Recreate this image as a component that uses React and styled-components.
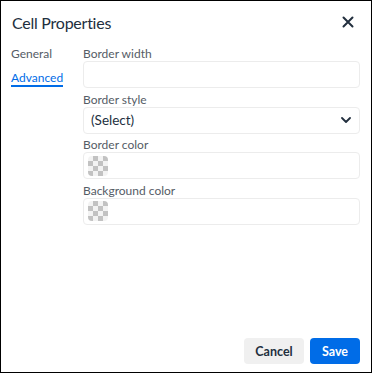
import styled, { createGlobalStyle } from 'styled-components'


const font = "'Lato', 'Noto Sans', sans-serif"

const GlobalStyle = createGlobalStyle`
  html, body {
    margin: 0;
    padding: 0;
    background: #fff;
  }

  * {
    box-sizing: border-box;
  }
`

const Dialog = styled.div`
  width: 372px;
  height: 373px;
  border: 1px solid #000;
  background: #fff;
  display: flex;
  flex-direction: column;
  font-family: ${font};
  color: #222f3e;
`

const Header = styled.div`
  display: flex;
  align-items: center;
  justify-content: space-between;
  padding: 0 13px 0 11px;
  height: 42px;
`

const Title = styled.h1`
  margin: 0;
  font-size: 16px;
  letter-spacing: -0.25px;
  font-weight: 400;
  color: #222f3e;
`

const CloseButton = styled.button`
  border: 0;
  background: none;
  padding: 0;
  width: 20px;
  height: 20px;
  display: flex;
  align-items: center;
  justify-content: center;
  cursor: pointer;
`

const Body = styled.div`
  flex: 1;
  display: flex;
  padding: 3px 11px 0 10px;
`

const Tabs = styled.div`
  width: 72px;
  display: flex;
  flex-direction: column;
  gap: 7px;
`

const Tab = styled.div`
  font-size: 12px;
  line-height: 15px;
  color: ${p => p.active ? '#006ce7' : '#555c66'};
  align-self: flex-start;
  border-bottom: 2px solid ${p => p.active ? '#006ce7' : 'transparent'};
`

const Form = styled.div`
  flex: 1;
  display: flex;
  flex-direction: column;
`

const Label = styled.label`
  font-size: 12px;
  line-height: 15px;
  color: #555c66;
`

const Field = styled.div`
  height: 27px;
  border: 1px solid #ececec;
  border-radius: 4px;
  display: flex;
  align-items: center;
  justify-content: space-between;
  padding: 0 8px 0 7px;
  margin-bottom: 3.5px;
  font-size: 13.5px;
  color: #222f3e;
`

const Swatch = styled.div`
  width: 20px;
  height: 20px;
  border-radius: 4px;
  margin-left: -3px;
  background: repeating-conic-gradient(#c2c2c2 0 25%, #f3f3f3 0 50%) 0 0 / 10px 10px;
`

const Footer = styled.div`
  display: flex;
  justify-content: flex-end;
  gap: 6px;
  padding: 0 11px 8px 0;
`

const Button = styled.button`
  height: 26px;
  width: ${p => p.primary ? 50 : 60}px;
  padding: 0;
  border: 0;
  border-radius: 4px;
  font-family: ${font};
  font-size: 12.5px;
  font-weight: 700;
  background: ${p => p.primary ? '#006ce7' : '#f0f0f0'};
  color: ${p => p.primary ? '#fff' : '#222f3e'};
  cursor: pointer;
`



function App() {
  return (
    <>
      <GlobalStyle />
      <Dialog>
        <Header>
          <Title>Cell Properties</Title>
          <CloseButton aria-label='Close'>
            <svg width='12' height='12' viewBox='0 0 12 12'>
              <path d='M1.5 1.5 L10.5 10.5 M10.5 1.5 L1.5 10.5' stroke='#222f3e' strokeWidth='2' strokeLinecap='round' />
            </svg>
          </CloseButton>
        </Header>

        <Body>
          <Tabs>
            <Tab>General</Tab>
            <Tab active>Advanced</Tab>
          </Tabs>

          <Form>
            <Label>Border width</Label>
            <Field />

            <Label>Border style</Label>
            <Field>
              <span>(Select)</span>
              <svg width='10' height='6' viewBox='0 0 10 6'>
                <path d='M1 1 L5 5 L9 1' stroke='#222f3e' strokeWidth='1.8' fill='none' strokeLinecap='round' strokeLinejoin='round' />
              </svg>
            </Field>

            <Label>Border color</Label>
            <Field><Swatch /></Field>

            <Label>Background color</Label>
            <Field><Swatch /></Field>
          </Form>
        </Body>

        <Footer>
          <Button>Cancel</Button>
          <Button primary>Save</Button>
        </Footer>
      </Dialog>
    </>
  )
}

export default App;
